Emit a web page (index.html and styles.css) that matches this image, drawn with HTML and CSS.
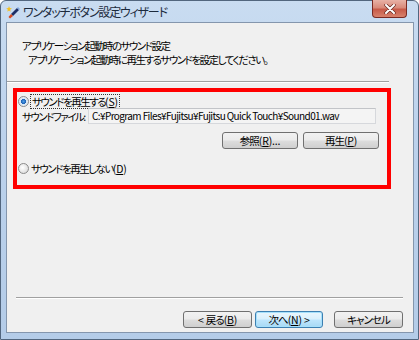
FILE: index.html
```html
<!DOCTYPE html>
<html lang="ja">
<head>
    <meta charset="UTF-8">
    <meta name="viewport" content="width=device-width, initial-scale=1.0">
    <title>ワンタッチボタン設定ウィザード</title>
    <link rel="stylesheet" href="styles.css">
</head>
<body>
    <div class="window">
        <div class="titlebar">
            <svg class="app-icon" width="14" height="14" viewBox="0 0 14 14">
                <path d="M3 1 L3.8 3 L6 3.4 L4.2 4.6 L4.6 6.8 L3 5.6 L1.4 6.8 L1.8 4.6 L0.2 3.4 L2.3 3 Z" fill="#f4c020"/>
                <path d="M5 9 L11 3 L13 5 L7 11 Z" fill="#1d2f66"/>
                <path d="M5 9 L7 11 L4 13.5 L2.5 12 Z" fill="#d84a20"/>
                <path d="M11 3 L12 2 L14 4 L13 5 Z" fill="#7fa8e0"/>
            </svg>
            <span class="title">ワンタッチボタン設定ウィザード</span>
            <div class="close-btn">
                <svg width="12" height="10" viewBox="0 0 12 10">
                    <path d="M2 1 L10 9 M10 1 L2 9" stroke="#6a2a20" stroke-width="3.4" stroke-linecap="round"/>
                    <path d="M2 1 L10 9 M10 1 L2 9" stroke="#fff" stroke-width="2" stroke-linecap="round"/>
                </svg>
            </div>
        </div>

        <div class="client">
            <div class="header">
                <div class="header-title">アプリケーション起動時のサウンド設定</div>
                <div class="header-sub">アプリケーション起動時に再生するサウンドを設定してください。</div>
            </div>
            <div class="header-line"></div>

            <div class="content">
                <div class="highlight">
                    <label class="radio-row">
                        <span class="radio checked"></span>
                        <span class="focus-text">サウンドを再生する<span class="key">(<u>S</u>)</span></span>
                    </label>
                    <div class="file-row">
                        <span class="file-label">サウンドファイル:</span>
                        <div class="file-field">C:¥Program Files¥Fujitsu¥Fujitsu Quick Touch¥Sound01.wav</div>
                    </div>
                    <div class="file-buttons">
                        <button class="btn">参照<span class="key">(<u>R</u>)...</span></button>
                        <button class="btn">再生<span class="key">(<u>P</u>)</span></button>
                    </div>
                    <label class="radio-row off">
                        <span class="radio"></span>
                        <span>サウンドを再生しない<span class="key">(<u>D</u>)</span></span>
                    </label>
                </div>
            </div>

            <div class="footer-line"></div>
            <div class="footer">
                <button class="btn"><span class="key">&lt; </span>戻る<span class="key">(<u>B</u>)</span></button>
                <button class="btn default">次へ<span class="key">(<u>N</u>) &gt;</span></button>
                <button class="btn cancel">キャンセル</button>
            </div>
        </div>
    </div>
</body>
</html>
```

FILE: styles.css
```css
body {
    margin: 0;
    background: #fff;
    font-family: "Noto Sans CJK JP", "Liberation Sans", sans-serif;
    font-feature-settings: "palt";
    color: #000;
}

.window {
    width: 419px;
    height: 340px;
    box-sizing: border-box;
    border: 1px solid #52667e;
    border-radius: 6px 6px 0 0;
    background: linear-gradient(to bottom, #c9dcf1 0%, #bcd2ec 40%, #b4cce8 100%);
    display: flex;
    flex-direction: column;
}

.titlebar {
    height: 21px;
    display: flex;
    align-items: flex-start;
    padding-left: 5px;
}

.app-icon {
    margin-top: 4px;
}

.title {
    margin-left: 3px;
    margin-top: 3px;
    font-size: 12px;
    line-height: 16px;
    color: #1c2a3c;
    letter-spacing: -1.2px;
    white-space: nowrap;
}

.close-btn {
    margin-left: auto;
    margin-right: 11px;
    margin-top: -1px;
    width: 35px;
    height: 18px;
    box-sizing: border-box;
    border: 1px solid #7a2a22;
    border-top: none;
    border-radius: 0 0 4px 4px;
    background: linear-gradient(to bottom, #e8b2a6 0%, #d98a7a 45%, #c75a48 55%, #d8826c 100%);
    display: flex;
    align-items: center;
    justify-content: center;
}

.client {
    flex: 1;
    margin: 0 4px 6px 5px;
    border: 1px solid #8496ad;
    background: #f0f0f0;
    display: flex;
    flex-direction: column;
    font-size: 10.5px;
    letter-spacing: -1.5px;
    white-space: nowrap;
}

.key {
    letter-spacing: -0.2px;
}

.header {
    padding: 16px 0 0 15px;
    height: 42px;
    line-height: 14px;
}

.header-sub {
    padding-left: 6px;
}

.header-line {
    height: 1px;
    background: #a0a0a0;
    border-bottom: 1px solid #fff;
    margin-right: 24px;
}

.content {
    flex: 1;
    padding: 5px 22px 0 6px;
}

.highlight {
    border: 4px solid #ff0000;
    height: 91px;
    padding: 2px 6px 0 1px;
}

.radio-row {
    display: flex;
    align-items: center;
    gap: 2px;
    height: 15px;
    line-height: 13px;
}

.radio {
    width: 11px;
    height: 11px;
    box-sizing: border-box;
    border-radius: 50%;
    border: 1px solid #8a8a8a;
    background: radial-gradient(circle at 40% 40%, #fff 0%, #e4e4e4 60%, #cfcfcf 100%);
}

.radio.checked {
    background: radial-gradient(circle, #4fa0e8 0%, #1a5fb4 38%, #d8e6f4 42%, #f4f4f4 100%);
}

.focus-text {
    outline: 1px dotted #333;
    padding: 0 1px;
}

.off {
    margin-top: 12px;
}

.file-row {
    display: flex;
    align-items: center;
    margin-top: -1px;
    padding-left: 4px;
}

.file-label {
    width: 66px;
    flex-shrink: 0;
}

.file-field {
    flex: 1;
    height: 16px;
    box-sizing: border-box;
    border: 1px solid #d6d8dc;
    border-top-color: #c2c4c8;
    background: #f4f4f4;
    padding-left: 3px;
    font-size: 10px;
    line-height: 14px;
    letter-spacing: -0.6px;
    margin-right: 5px;
    overflow: hidden;
}

.file-buttons {
    display: flex;
    justify-content: flex-end;
    gap: 5px;
    margin-top: 8px;
    margin-right: 2px;
}

.btn {
    width: 76px;
    height: 17px;
    padding: 0;
    border: 1px solid #707070;
    border-radius: 3px;
    background: linear-gradient(to bottom, #f2f2f2 0%, #ebebeb 48%, #dddddd 52%, #cfcfcf 100%);
    font-family: inherit;
    font-feature-settings: "palt";
    font-size: 10.5px;
    letter-spacing: -1px;
    line-height: 14px;
    color: #000;
}

.footer-line {
    height: 1px;
    background: #a0a0a0;
    border-bottom: 1px solid #fff;
    margin: 0 10px 0 9px;
}

.footer {
    display: flex;
    justify-content: flex-end;
    padding: 12px 10px 4px 0;
    gap: 3px;
}

.footer .btn {
    width: 69px;
}

.btn.default {
    width: 68px;
    border-color: #3c7fb1;
    box-shadow: inset 0 0 0 1px #a6e0fb;
    background: linear-gradient(to bottom, #eaf6fd 0%, #d9f0fc 48%, #bee6fd 52%, #a7d9f5 100%);
}

.footer .btn.cancel {
    margin-left: 8px;
}
```
